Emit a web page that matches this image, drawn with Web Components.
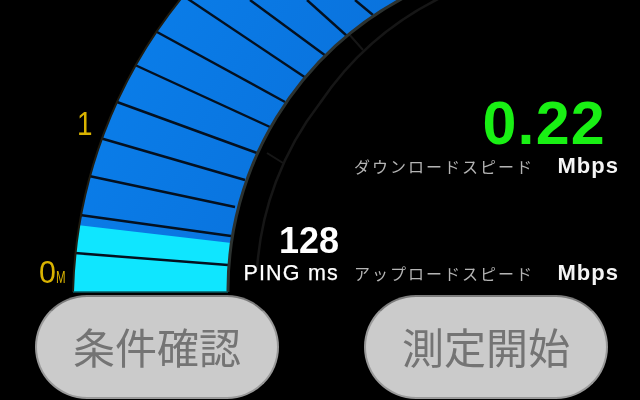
<!DOCTYPE html>
<html><head><meta charset="utf-8"><style>
html,body{margin:0;background:#000;width:640px;height:400px;overflow:hidden}
</style></head><body>
<speed-app>
  <speed-readout slot="readout" value="0.22" ping="128"></speed-readout>
  <pill-button slot="buttons">条件確認</pill-button>
  <pill-button slot="buttons">測定開始</pill-button>
</speed-app>
<script>
const SANS='"Liberation Sans",Arimo,sans-serif';
const CJK='"Noto Sans CJK JP","Liberation Sans",sans-serif';
class SpeedGauge extends HTMLElement{
  constructor(){super();
    const lines=[[185,-3,306,78],[157,32,285,102],[135,65,270,127],[117,102,257,153],[100,138,245,180],[89,176,235,207],[80,215,231,236],[74,253,228,265],[250,0,326,56],[307,0,347,36],[355,0,373,15]];
    const arc='M73 292A486 486 0 0 1 184 -5L409 -5A331 331 0 0 0 228 292Z';
    this.attachShadow({mode:'open'}).innerHTML=`<style>
      :host{display:block;position:absolute;inset:0}
      svg{display:block;filter:blur(.55px)}
      text{font-family:${SANS};fill:#d9b300}
    </style>
    <svg width="640" height="400" viewBox="0 0 640 400">
      <defs>
        <linearGradient id="b" x1="0" y1="0" x2="1" y2=".45"><stop offset="0" stop-color="#0a80ec"/><stop offset="1" stop-color="#0a70da"/></linearGradient>
        <clipPath id="c"><path d="${arc}"/></clipPath>
      </defs>
      <path d="M257 270A303 303 0 0 1 320 103A312 312 0 0 1 440 -2" fill="none" stroke="#161616" stroke-width="2.5"/>
      <path d="M348 33L363 50M267 153L283 163" stroke="#161616" stroke-width="2"/>
      <path d="${arc}" fill="url(#b)"/>
      <g clip-path="url(#c)">
        <path d="M60 223L240 244L240 300L60 300Z" fill="#0fe6ff"/>
        ${lines.map(l=>`<line x1="${l[0]}" y1="${l[1]}" x2="${l[2]}" y2="${l[3]}" stroke="#04101f" stroke-width="2.4"/>`).join('')}
      </g>
      <path d="M73 292A486 486 0 0 1 184 -5" fill="none" stroke="#201c10" stroke-width="2"/>
      <path d="M409 -5A331 331 0 0 0 228 292" fill="none" stroke="#2c3230" stroke-width="3"/>
      <path d="M73 292L228 292" stroke="#0b5a62" stroke-width="1.5"/>
      <g transform="translate(77 135) scale(.82 1)"><text font-size="34">1</text></g>
      <g transform="translate(39 283) scale(.98 1)"><text font-size="31">0</text></g>
      <g transform="translate(56 283) scale(.72 1)"><text font-size="16">M</text></g>
    </svg>`;
  }
}
class SpeedReadout extends HTMLElement{
  constructor(){super();
    this.attachShadow({mode:'open'}).innerHTML=`<style>
      :host{display:grid;grid-template-columns:339px 265px;column-gap:15px;grid-template-rows:147px 31px 80px 30px;width:619px;position:relative;font-family:${SANS};color:#fff}
      #v{grid-column:2;grid-row:1;justify-self:end;align-self:end;margin-right:13px;color:#19f014;font-size:61px;line-height:48px;font-weight:700;letter-spacing:1.2px}
      #p{grid-column:1;grid-row:3;justify-self:end;align-self:end;font-size:36px;line-height:28px;font-weight:700;margin-bottom:3px}
      #pl{grid-column:1;grid-row:4;justify-self:end;align-self:center;font-size:21.5px;line-height:26px;letter-spacing:1.2px;white-space:nowrap;-webkit-text-stroke:.25px #fff}
      .l{display:flex;justify-content:space-between;align-items:center;white-space:nowrap}
      .l span:first-child{font-family:${CJK};font-size:16px;line-height:24px;letter-spacing:2px;color:#b4b4b4}
      .l span:last-child{font-size:22px;line-height:24px;font-weight:700;letter-spacing:1px;color:#f4f4f4}
      #s1{grid-column:2;grid-row:2;margin-top:7px}
      #s2{grid-column:2;grid-row:4}
      div{filter:blur(.35px)}
    </style>
    <div id="v">${this.getAttribute('value')}</div>
    <div class="l" id="s1"><span>ダウンロードスピード</span><span>Mbps</span></div>
    <div id="p">${this.getAttribute('ping')}</div>
    <div id="pl">PING ms</div>
    <div class="l" id="s2"><span>アップロードスピード</span><span>Mbps</span></div>`;
  }
}
class PillButton extends HTMLElement{
  constructor(){super();
    this.attachShadow({mode:'open'}).innerHTML=`<style>
      :host{display:flex;box-sizing:border-box;width:244px;height:104px;border-radius:52px;background:#cbcbcb;border:2px solid #999;border-top-color:#7c7c7c;align-items:center;justify-content:center;color:#747474;font:400 42px/1 ${CJK};filter:blur(.45px)}
      span{display:block;position:relative;top:-1px}
    </style><span><slot></slot></span>`;
  }
}
class SpeedApp extends HTMLElement{
  constructor(){super();
    this.attachShadow({mode:'open'}).innerHTML=`<style>
      :host{display:block;position:relative;width:640px;height:400px;overflow:hidden;background:#000}
      #top{height:295px;position:relative}
      #btn{display:flex;gap:85px;padding-left:35px}
    </style>
    <speed-gauge></speed-gauge>
    <div id="top"><slot name="readout"></slot></div>
    <div id="btn"><slot name="buttons"></slot></div>`;
  }
}
customElements.define('speed-gauge',SpeedGauge);
customElements.define('speed-readout',SpeedReadout);
customElements.define('pill-button',PillButton);
customElements.define('speed-app',SpeedApp);
</script>
</body></html>
